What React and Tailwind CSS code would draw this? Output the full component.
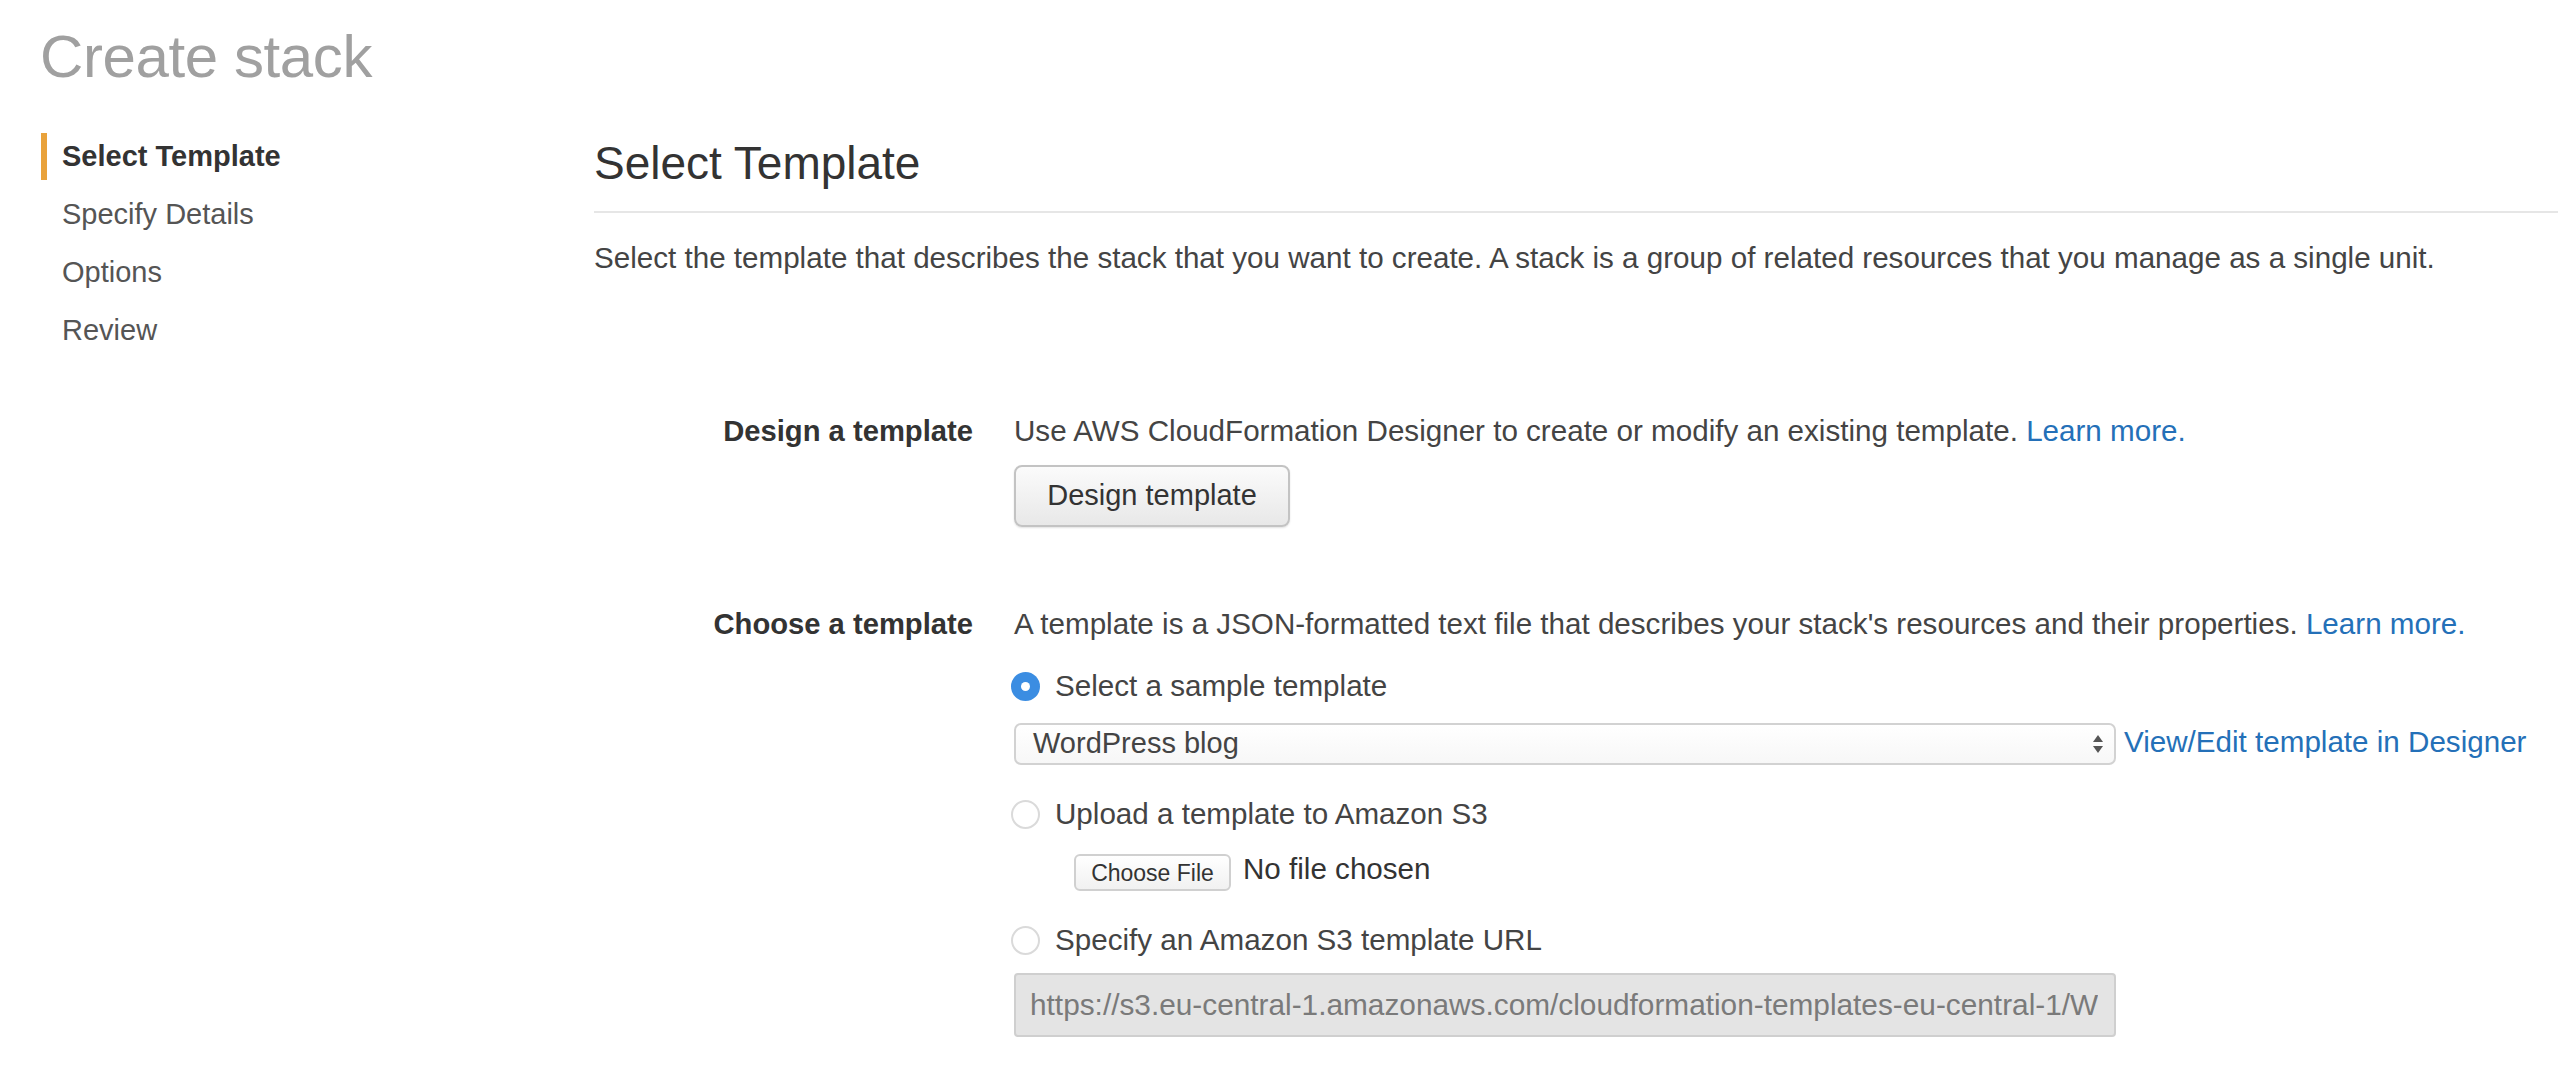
const steps = [
  { label: 'Select Template', active: true },
  { label: 'Specify Details' },
  { label: 'Options' },
  { label: 'Review' },
];

function Radio({ checked }) {
  if (checked) {
    return (
      <span className="ml-[-3px] w-[29px] h-[29px] shrink-0 rounded-full bg-[#3b8de2] flex items-center justify-center">
        <span className="w-[9px] h-[9px] rounded-full bg-white" />
      </span>
    );
  }
  return <span className="ml-[-3px] w-[29px] h-[29px] shrink-0 rounded-full border-2 border-[#dadada] bg-white" />;
}

function RadioRow({ checked, children, className }) {
  return (
    <div className={`flex items-center gap-[15px] h-[36px] ${className}`}>
      <Radio checked={checked} />
      <span className="text-[29.6px] leading-[36px] text-[#444]">{children}</span>
    </div>
  );
}

export default function App() {
  return (
    <div className="w-[2558px] h-[1070px] bg-white overflow-hidden font-['Liberation_Sans',Arial,sans-serif] text-[#444]">
      <h1 className="pl-[40px] pt-[27px] text-[60px] leading-[60px] font-normal text-[#a0a0a0] tracking-[-0.4px]">Create stack</h1>

      <div className="flex mt-[46px]">
        {/* step nav */}
        <nav className="w-[594px] shrink-0 pl-[41px] flex flex-col gap-[11px]">
          {steps.map(s => (
            <div
              key={s.label}
              className={`h-[47px] flex items-center pl-[15px] border-l-[6px] text-[29px] ${s.active ? 'border-[#e9a23b] font-bold text-[#333]' : 'border-transparent text-[#555]'}`}
            >
              {s.label}
            </div>
          ))}
        </nav>

        <main className="flex-1 min-w-0">
          <div className="pt-[8px] pb-[25px] border-b-2 border-[#e6e6e6]">
            <h2 className="text-[46px] leading-[45px] font-normal text-[#333]">Select Template</h2>
          </div>
          <p className="mt-[27px] text-[29.6px] leading-[36px] whitespace-nowrap">
            Select the template that describes the stack that you want to create. A stack is a group of related resources that you manage as a single unit.
          </p>

          {/* Design a template */}
          <div className="mt-[137px] grid grid-cols-[379px_1fr] gap-x-[41px]">
            <div className="text-right font-bold text-[29.2px] leading-[36px] text-[#333]">Design a template</div>
            <div>
              <p className="text-[29.6px] leading-[36px] whitespace-nowrap">
                Use AWS CloudFormation Designer to create or modify an existing template. <a className="text-[#2470b8]">Learn more.</a>
              </p>
              <button className="mt-[16px] w-[276px] h-[62px] rounded-[8px] border-2 border-[#c3c3c3] bg-gradient-to-b from-[#fbfbfb] to-[#e8e8e8] shadow-[0_1px_2px_rgba(0,0,0,0.12)] text-[29px] text-[#333]">
                Design template
              </button>
            </div>
          </div>

          {/* Choose a template */}
          <div className="mt-[79px] grid grid-cols-[379px_1fr] gap-x-[41px]">
            <div className="text-right font-bold text-[29.2px] leading-[36px] text-[#333]">Choose a template</div>
            <div>
              <p className="text-[29.6px] leading-[36px] whitespace-nowrap">
                A template is a JSON-formatted text file that describes your stack's resources and their properties. <a className="text-[#2470b8]">Learn more.</a>
              </p>

              <RadioRow checked className="mt-[26px]">Select a sample template</RadioRow>
              <div className="mt-[19px] flex items-center">
                <div className="w-[1102px] h-[42px] rounded-[7px] border-2 border-[#d2d2d2] bg-gradient-to-b from-white to-[#f7f7f7] flex items-center justify-between pl-[17px] pr-[10px]">
                  <span className="text-[29px] text-[#444]">WordPress blog</span>
                  <svg width="12" height="22" viewBox="0 0 12 22">
                    <path d="M6 2 L11 9 L1 9 Z" fill="#555" />
                    <path d="M6 20 L11 13 L1 13 Z" fill="#555" />
                  </svg>
                </div>
                <a className="ml-[8px] -mt-[4px] text-[29.6px] leading-[36px] text-[#2470b8] whitespace-nowrap">View/Edit template in Designer</a>
              </div>

              <RadioRow className="mt-[31px]">Upload a template to Amazon S3</RadioRow>
              <div className="mt-[22px] ml-[60px] flex items-center gap-[12px]">
                <button className="w-[157px] h-[37px] rounded-[6px] border-2 border-[#d0d0d0] bg-gradient-to-b from-white to-[#f1f1f1] text-[23px] text-[#333]">
                  Choose File
                </button>
                <span className="text-[29.6px] leading-[36px] text-[#333] -mt-[8px]">No file chosen</span>
              </div>

              <RadioRow className="mt-[31px]">Specify an Amazon S3 template URL</RadioRow>
              <div className="mt-[15px] w-[1102px] h-[64px] rounded-[4px] border-2 border-[#cfcfcf] bg-[#e4e4e4] flex items-center pl-[14px] pr-[10px] overflow-hidden">
                <span className="text-[29.8px] text-[#7a7a7a] whitespace-nowrap overflow-hidden">
                  https://s3.eu-central-1.amazonaws.com/cloudformation-templates-eu-central-1/W
                </span>
              </div>
            </div>
          </div>
        </main>
      </div>
    </div>
  );
}
